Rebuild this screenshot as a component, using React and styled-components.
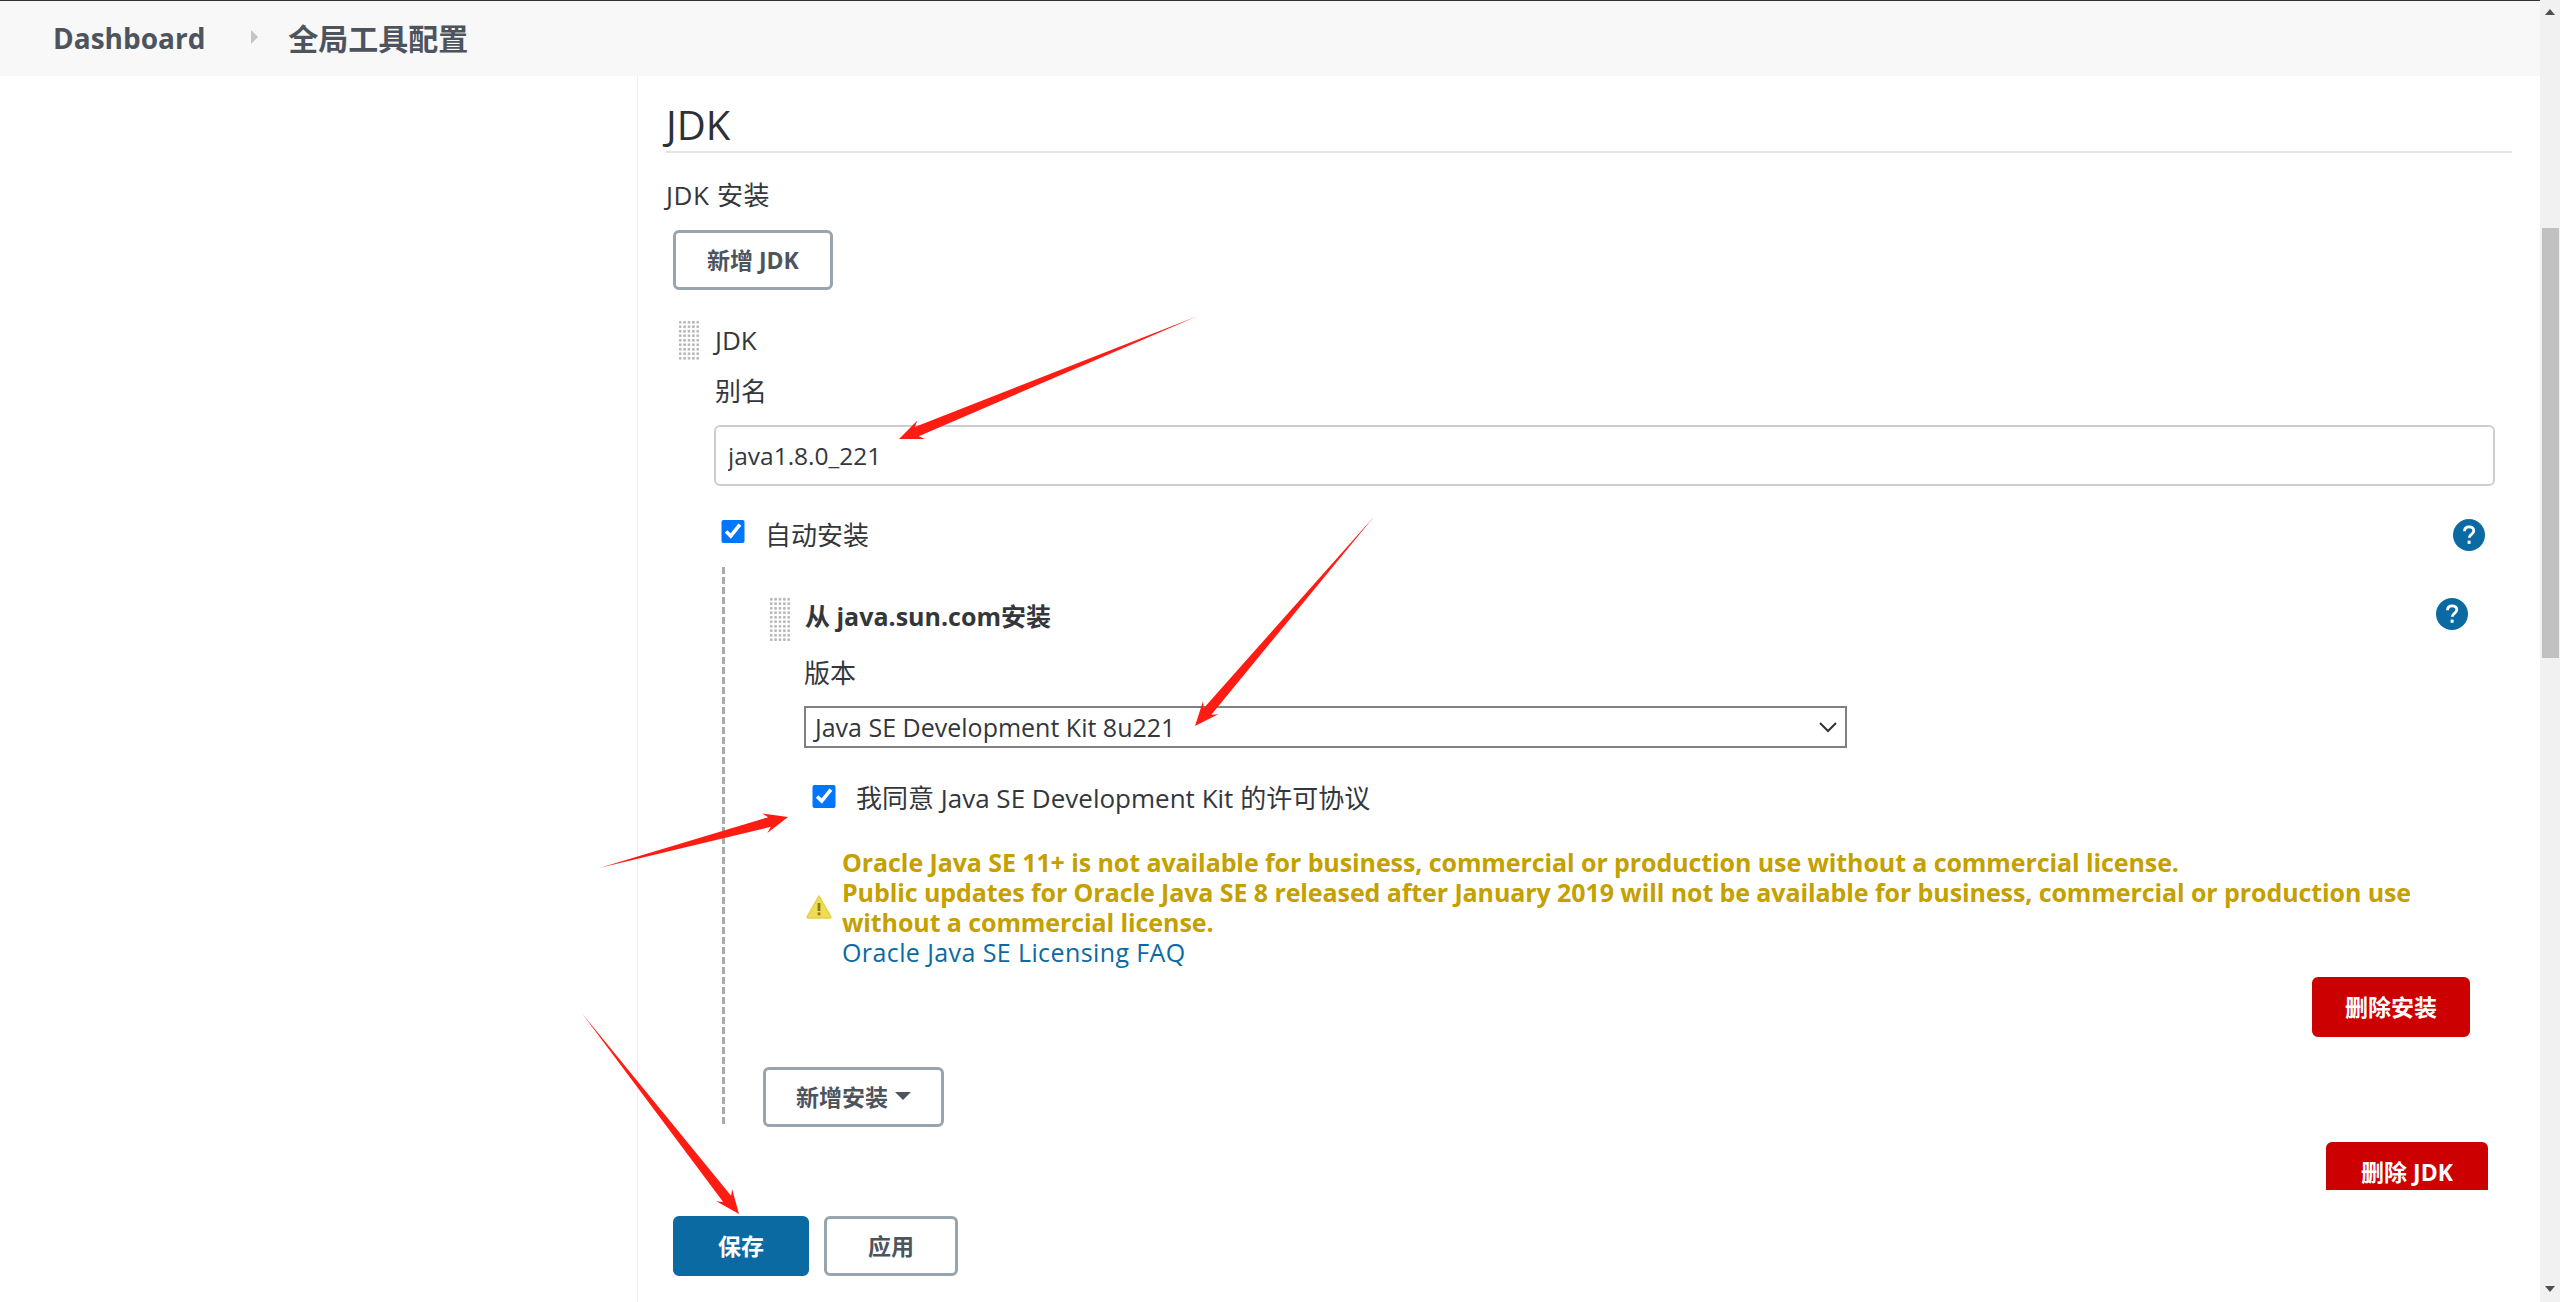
import React from "react";
import styled, { createGlobalStyle } from "styled-components";

const FONT = `"Open Sans", "Noto Sans CJK SC", sans-serif`;

const GlobalStyle = createGlobalStyle`
  html, body {
    margin: 0;
    padding: 0;
    background: #fff;
    overflow: hidden;
  }
  * { box-sizing: border-box; }
`;

const Page = styled.div`
  position: relative;
  display: flex;
  width: 2560px;
  height: 1302px;
  overflow: hidden;
  font-family: ${FONT};
  font-size: 26px;
  color: #33373c;
`;

const Main = styled.div`
  flex: 1;
  min-width: 0;
  display: flex;
  flex-direction: column;
`;

const Breadcrumb = styled.nav`
  height: 76px;
  flex: none;
  display: flex;
  align-items: center;
  padding: 0 0 3px 53px;
  border-top: 1px solid #333;
  background: #f8f8f8;
  color: #4d545d;
  font-weight: 700;
`;

const CrumbLink = styled.a`
  margin-top: 2px;
  font-size: 28px;
`;

const CrumbSep = styled.span`
  width: 0;
  height: 0;
  margin: 0 30px 0 46px;
  border-left: 7px solid #c4c4c4;
  border-top: 7px solid transparent;
  border-bottom: 7px solid transparent;
`;

const CrumbCurrent = styled.span`
  font-size: 30px;
`;

const Columns = styled.div`
  flex: 1;
  min-height: 0;
  display: flex;
`;

const SidePanel = styled.aside`
  width: 637px;
  flex: none;
`;

const ContentPanel = styled.main`
  flex: 1;
  min-width: 0;
  display: flex;
  flex-direction: column;
  border-left: 1px solid #eee;
`;

const FormScroll = styled.div`
  flex: 1;
  min-height: 0;
  overflow: hidden;
  padding: 0 28px;
`;

const SectionTitle = styled.h2`
  margin: 0;
  padding: 26px 0 3px;
  border-bottom: 2px solid #e4e4e4;
  font-size: 40px;
  line-height: 46px;
  font-weight: 400;
  color: #2d3136;
`;

const SectionLabel = styled.div`
  margin-top: 24px;
  line-height: 36px;
  letter-spacing: 0.6px;
`;

const Button = styled.button`
  display: block;
  height: ${(p) => p.$height || 60}px;
  padding: 0 ${(p) => p.$pad || 30}px 3px;
  border-radius: 6px;
  border: 3px solid ${(p) => p.$border || "#98a5af"};
  background: ${(p) => p.$bg || "#fff"};
  color: ${(p) => p.$color || "#4d545d"};
  font-family: ${FONT};
  font-size: 23px;
  font-weight: 700;
  white-space: nowrap;
`;

const AddJdk = styled(Button)`
  margin: 17px 0 0 7px;
`;

const Entry = styled.div`
  margin-top: 30px;
  padding-left: 12px;
`;

const EntryHead = styled.div`
  display: flex;
  align-items: center;
  gap: 15px;
`;

const Handle = styled.span`
  flex: none;
  width: 22px;
  height: ${(p) => p.$h}px;
  background-image: radial-gradient(circle, #b4b4b4 1.1px, transparent 1.7px);
  background-size: 4.4px 4.5px;
`;

const EntryTitle = styled.div`
  font-size: ${(p) => (p.$bold ? 25 : 26)}px;
  line-height: 36px;
  font-weight: ${(p) => (p.$bold ? 700 : 400)};
  margin-bottom: ${(p) => (p.$bold ? 8 : 0)}px;
`;

const EntryBody = styled.div`
  padding-left: 37px;
  margin-right: 17px;
`;

const FieldLabel = styled.div`
  line-height: 36px;
  margin-top: ${(p) => p.$top}px;
`;

const TextBox = styled.input`
  display: block;
  width: calc(100% + 1px);
  height: 61px;
  margin: 16px 0 0 -1px;
  padding: 0 12px;
  border: 2px solid #cdcdcd;
  border-radius: 6px;
  outline: none;
  font-family: ${FONT};
  font-size: 24.5px;
  color: #33373c;
`;

const CheckRow = styled.label`
  display: flex;
  align-items: center;
  height: 36px;
  margin-top: ${(p) => p.$top}px;
  padding-left: ${(p) => p.$left}px;
  padding-right: 10px;
  line-height: 36px;
`;

const Check = styled.input`
  flex: none;
  width: 24px;
  height: 23px;
  margin: 0 20px ${(p) => p.$lift}px 0;
`;

const HelpMark = styled.svg`
  flex: none;
  width: 32px;
  height: 32px;
  margin-left: auto;
  margin-bottom: ${(p) => p.$lift || 0}px;
`;

const Nested = styled.div`
  margin: 14px 0 0 7px;
  padding: 30px 25px 0 42px;
  background: repeating-linear-gradient(to bottom, #aaa 0 7px, transparent 7px 10px) left top / 3px 100% no-repeat;
`;

const NestedHead = styled(EntryHead)`
  margin-left: 5px;
  gap: 14px;
  padding-right: 2px;
`;

const NestedFields = styled.div`
  padding-left: 40px;
`;

const SelectBox = styled.div`
  display: flex;
  align-items: center;
  justify-content: space-between;
  width: 1043px;
  height: 42px;
  margin-top: 15px;
  padding: 0 7px 0 9px;
  border: 2px solid #808080;
  font-size: 25px;
  line-height: 36px;
`;

const Chevron = styled.svg`
  width: 20px;
  height: 12px;
`;

const Warning = styled.div`
  display: flex;
  align-items: center;
  gap: 10px;
  margin: 31px 0 0 2px;
  font-weight: 700;
  font-size: 25px;
  line-height: 30px;
  letter-spacing: -0.09px;
  color: #c4a000;
  white-space: nowrap;
`;

const WarningIcon = styled.svg`
  flex: none;
  width: 26px;
  height: 24px;
`;

const FaqLink = styled.a`
  color: #0b6aa2;
  font-weight: 500;
  letter-spacing: 0.4px;
`;

const RightAlign = styled.div`
  display: flex;
  justify-content: flex-end;
  margin-top: ${(p) => p.$top}px;
  margin-right: ${(p) => p.$right}px;
`;

const AddInstall = styled(Button)`
  display: flex;
  align-items: center;
  gap: 7px;
  margin: 30px 0 0 -1px;
`;

const Caret = styled.span`
  width: 0;
  height: 0;
  border-left: 8px solid transparent;
  border-right: 8px solid transparent;
  border-top: 8px solid #4d545d;
`;

const BottomBar = styled.div`
  flex: none;
  height: 112px;
  display: flex;
  gap: 15px;
  padding: 26px 0 0 35px;
  background: #fff;
`;

const ScrollTrack = styled.div`
  flex: none;
  width: 20px;
  display: flex;
  flex-direction: column;
  align-items: center;
  background: #f1f1f1;
`;

const ScrollArrow = styled.span`
  width: 0;
  height: 0;
  margin-top: ${(p) => p.$top}px;
  border-left: 5px solid transparent;
  border-right: 5px solid transparent;
  ${(p) => (p.$down ? "border-top: 6px solid #505050;" : "border-bottom: 6px solid #505050;")}
`;

const ScrollThumb = styled.div`
  width: 17px;
  height: 430px;
  margin-top: 213px;
  background: #c1c1c1;
`;

const Annotations = styled.svg`
  position: absolute;
  inset: 0;
  pointer-events: none;
`;

// tapered red arrow like the ones drawn with a screenshot tool
const arrowPoints = ([tx, ty], [hx, hy], neck, barb, headLen) => {
  const len = Math.hypot(hx - tx, hy - ty);
  const dx = (hx - tx) / len;
  const dy = (hy - ty) / len;
  const at = (along, side) => `${(tx + dx * along - dy * side).toFixed(1)},${(ty + dy * along + dx * side).toFixed(1)}`;
  return [
    at(-3, 0),
    at(len - headLen * 0.8, neck),
    at(len - headLen, barb),
    at(len, 0),
    at(len - headLen, -barb),
    at(len - headLen * 0.8, -neck),
  ].join(" ");
};

const ARROWS = [
  { tail: [1195, 317], head: [899, 439], neck: 5, barb: 10, headLen: 24 },
  { tail: [1372, 519], head: [1195, 726], neck: 5, barb: 10, headLen: 24 },
  { tail: [603, 867], head: [788, 817], neck: 5, barb: 10, headLen: 24 },
  { tail: [584, 1016], head: [739, 1214], neck: 5, barb: 10, headLen: 24 },
];

const Help = ({ lift }) => (
  <HelpMark $lift={lift} viewBox="0 0 32 32">
    <circle cx="16" cy="16" r="16" fill="#0b6aa2" />
    <path d="M11.5 12.2c0-2.8 2-4.4 4.7-4.4s4.6 1.6 4.6 4c0 3.6-4.6 3.4-4.6 7" fill="none" stroke="#fff" strokeWidth="2.8" />
    <rect x="14.6" y="21.6" width="3" height="3.2" fill="#fff" />
  </HelpMark>
);

export default function App() {
  return (
    <Page>
      <GlobalStyle />
      <Main>
        <Breadcrumb>
          <CrumbLink>Dashboard</CrumbLink>
          <CrumbSep />
          <CrumbCurrent>全局工具配置</CrumbCurrent>
        </Breadcrumb>
        <Columns>
          <SidePanel />
          <ContentPanel>
            <FormScroll>
              <SectionTitle>JDK</SectionTitle>
              <SectionLabel>JDK 安装</SectionLabel>
              <AddJdk $pad={31}>新增 JDK</AddJdk>
              <Entry>
                <EntryHead>
                  <Handle $h={40} />
                  <EntryTitle>JDK</EntryTitle>
                </EntryHead>
                <EntryBody>
                  <FieldLabel $top={13}>别名</FieldLabel>
                  <TextBox defaultValue="java1.8.0_221" />
                  <CheckRow $top={31} $left={6}>
                    <Check type="checkbox" defaultChecked $lift={8} />
                    自动安装
                    <Help lift={0} />
                  </CheckRow>
                  <Nested>
                    <NestedHead>
                      <Handle $h={45} />
                      <EntryTitle $bold>从 java.sun.com安装</EntryTitle>
                      <Help lift={12} />
                    </NestedHead>
                    <NestedFields>
                      <FieldLabel $top={13}>版本</FieldLabel>
                      <SelectBox>
                        Java SE Development Kit 8u221
                        <Chevron viewBox="0 0 20 12">
                          <path d="M2 2l8 8 8-8" fill="none" stroke="#333" strokeWidth="2" />
                        </Chevron>
                      </SelectBox>
                      <CheckRow $top={32} $left={8}>
                        <Check type="checkbox" defaultChecked $lift={3} />
                        我同意 Java SE Development Kit 的许可协议
                      </CheckRow>
                      <Warning>
                        <WarningIcon viewBox="0 0 26 24">
                          <path d="M13 1L25 22a1 1 0 0 1-1 1H2a1 1 0 0 1-1-1z" fill="#efdc55" stroke="#e6d040" strokeWidth="1.5" strokeLinejoin="round" />
                          <rect x="11.6" y="8" width="2.8" height="8" fill="#8a7a1e" />
                          <rect x="11.6" y="17.5" width="2.8" height="2.8" fill="#8a7a1e" />
                        </WarningIcon>
                        <div>
                          Oracle Java SE 11+ is not available for business, commercial or production use without a commercial license.
                          <br />
                          Public updates for Oracle Java SE 8 released after January 2019 will not be available for business, commercial or production use
                          <br />
                          without a commercial license.
                          <br />
                          <FaqLink>Oracle Java SE Licensing FAQ</FaqLink>
                        </div>
                      </Warning>
                    </NestedFields>
                    <RightAlign $top={10} $right={0}>
                      <Button $pad={30} $bg="#cc0000" $border="#cc0000" $color="#fff">删除安装</Button>
                    </RightAlign>
                    <AddInstall $pad={30}>
                      新增安装
                      <Caret />
                    </AddInstall>
                  </Nested>
                  <RightAlign $top={15} $right={7}>
                    <Button $pad={32} $bg="#cc0000" $border="#cc0000" $color="#fff">删除 JDK</Button>
                  </RightAlign>
                </EntryBody>
              </Entry>
            </FormScroll>
            <BottomBar>
              <Button $pad={42} $bg="#0b6aa2" $border="#0b6aa2" $color="#fff">保存</Button>
              <Button $pad={41}>应用</Button>
            </BottomBar>
          </ContentPanel>
        </Columns>
      </Main>
      <ScrollTrack>
        <ScrollArrow $top={9} />
        <ScrollThumb />
        <ScrollArrow $top={628} $down />
      </ScrollTrack>
      <Annotations width="2560" height="1302" viewBox="0 0 2560 1302">
        {ARROWS.map((a, i) => (
          <polygon key={i} points={arrowPoints(a.tail, a.head, a.neck, a.barb, a.headLen)} fill="#ff1c12" />
        ))}
      </Annotations>
    </Page>
  );
}
